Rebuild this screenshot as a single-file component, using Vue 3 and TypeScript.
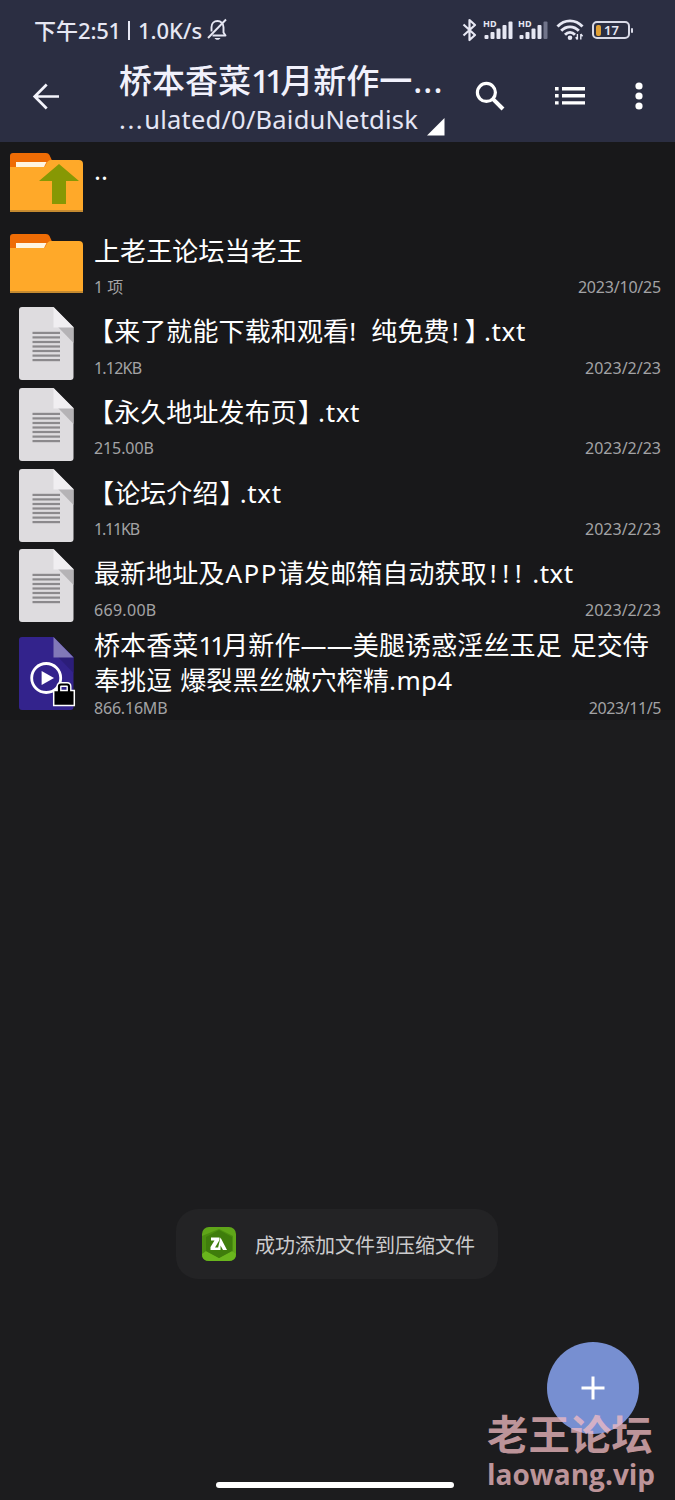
<script setup lang="ts">
interface Run {
  t: string
  l?: number
  r?: number
  s?: number
  half?: boolean
}
interface Entry {
  kind: 'up' | 'folder' | 'text' | 'video'
  lines: Run[][]
  size?: string
  sizeSpacing?: number
  date?: string
  dateSpacing?: number
}

const entries: Entry[] = [
  { kind: 'up', lines: [[{ t: '..' }]] },
  { kind: 'folder', lines: [[{ t: '上老王论坛当老王' }]], size: '1 项', date: '2023/10/25', dateSpacing: -0.2 },
  {
    kind: 'text',
    lines: [[{ t: '【', l: 7, half: true }, { t: '来了就能下载和观看' }, { t: '!', r: 15 }, { t: '纯免费' }, { t: '!', l: 2, r: 6 }, { t: '】', r: 6, half: true }, { t: '.txt', s: 0.6 }]],
    size: '1.12KB',
    sizeSpacing: -0.8,
    date: '2023/2/23',
  },
  {
    kind: 'text',
    lines: [[{ t: '【', l: 7, half: true }, { t: '永久地址发布页' }, { t: '】', l: 1, r: 7, half: true }, { t: '.txt', s: 0.6 }]],
    size: '215.00B',
    sizeSpacing: -0.1,
    date: '2023/2/23',
  },
  {
    kind: 'text',
    lines: [[{ t: '【', l: 7, half: true }, { t: '论坛介绍' }, { t: '】', l: 1, r: 7, half: true }, { t: '.txt', s: 0.6 }]],
    size: '1.11KB',
    sizeSpacing: -1.2,
    date: '2023/2/23',
  },
  {
    kind: 'text',
    lines: [[{ t: '最新地址及' }, { t: 'APP', l: 1, s: 1.4 }, { t: '请发邮箱自动获取' }, { t: '!!!', l: 3, s: 5.5 }, { t: '.txt', l: 5, s: 0.4 }]],
    size: '669.00B',
    sizeSpacing: 0.3,
    date: '2023/2/23',
  },
  {
    kind: 'video',
    lines: [
      [{ t: '桥本香菜' }, { t: '11', s: -3 }, { t: '月新作——美腿诱惑淫丝玉足' }, { t: ' ', s: 2 }, { t: '足交侍' }],
      [{ t: '奉挑逗' }, { t: ' ', s: 1 }, { t: '爆裂黑丝嫩穴榨精' }, { t: '.mp4', s: 0.3 }],
    ],
    size: '866.16MB',
    sizeSpacing: -0.2,
    date: '2023/11/5',
    dateSpacing: -0.4,
  },
]

const px = (n?: number) => `${n ?? 0}px`
const runStyle = (r: Run) => ({ marginLeft: px(r.l), marginRight: px(r.r), letterSpacing: px(r.s ?? 0.12) })
const docLines = [25.6, 30.1, 34.7, 39.2, 43.7, 48.3, 52.8]
const bars = [4, 7, 10.5, 14, 17.5]
</script>

<template>
  <div class="screen">
    <header class="top">
      <div class="status">
        <span class="clock">下午<span class="latin">2:51</span></span>
        <span class="rule"></span>
        <span class="speed">1.0K/s</span>
        <svg class="bell" width="23" height="24" viewBox="0 0 23 24" fill="none" stroke="#e6e7f3" stroke-width="1.9">
          <path d="M6.5 17.5H19.5L17.5 14.5V9.2C17.5 5.5 14.8 3 11.5 3C8.2 3 5.5 5.5 5.5 9.2V13.5" stroke-linejoin="round" />
          <path d="M20 1.5L2 20" />
          <path d="M8.5 20C9.5 22.4 13.5 22.4 14.5 20Z" fill="#e6e7f3" stroke="none" />
        </svg>
        <div class="grow"></div>
        <svg class="bt" width="15" height="24" viewBox="0 0 15 24" fill="none" stroke="#e6e7f3" stroke-width="2.2" stroke-linejoin="round">
          <path d="M1.5 6.5L13 17L7.5 22V2L13 7L1.5 17.5" />
        </svg>
        <div v-for="n in 2" :key="n" class="signal">
          <span class="hd">HD</span>
          <svg width="30" height="20" viewBox="0 0 30 20">
            <rect v-for="(h, i) in bars" :key="i" :x="1.5 + i * 6" :y="19 - h" width="4" :height="h" rx="1"
              :fill="n === 2 && i === 4 ? '#71748a' : '#e6e7f3'" />
          </svg>
        </div>
        <svg class="wifi" width="28" height="22" viewBox="0 0 28 22" fill="none" stroke="#e6e7f3" stroke-width="2.9">
          <path d="M1.5 7.5C8.5 0 19.5 0 26.5 7.5" />
          <path d="M5.2 11.8C10.2 6.5 17.8 6.5 22.8 11.8" />
          <path d="M9 15.8C12 12.8 16 12.8 19 15.8" />
          <circle cx="14" cy="18.7" r="2.3" fill="#e6e7f3" stroke="none" />
          <path d="M21.4 20.5V15M24.8 15V20.5M19.7 18.3L21.4 20.5M24.8 15L26.6 17.2" stroke-width="1.4" />
        </svg>
        <div class="battery">
          <span class="charge"></span><span class="percent">17</span>
          <span class="nub"></span>
        </div>
      </div>
      <div class="bar">
        <svg class="back" width="28" height="28" viewBox="0 0 28 28" fill="none" stroke="#f4f4fc" stroke-width="2.7">
          <path d="M27 14.5H3M14.7 2.5L2.7 14.5L14.7 26.5" />
        </svg>
        <div class="heading">
          <div class="title">桥本香菜<span class="ones">11</span>月新作一<span class="dots">...</span></div>
          <div class="path"><span class="lead">...</span>ulated/0/BaiduNetdisk</div>
          <svg class="corner" width="18" height="18" viewBox="0 0 18 18"><path d="M17.5 0V17.5H0Z" fill="#fff" /></svg>
        </div>
        <svg class="search" width="30" height="30" viewBox="0 0 30 30" fill="none" stroke="#fff">
          <circle cx="11.4" cy="11.4" r="9" stroke-width="3.2" />
          <path d="M17.8 17.8L28 28" stroke-width="4" />
        </svg>
        <svg class="lines" width="31" height="18" viewBox="0 0 31 18" fill="#fff">
          <path d="M0 0H3.600V3.400H0ZM0 7.100H3.600V10.500H0ZM0 14.200H3.600V17.600H0ZM7 0H30V3.400H7ZM7 7.100H30V10.500H7ZM7 14.200H30V17.600H7Z" />
        </svg>
        <svg class="more" width="8" height="28" viewBox="0 0 8 28" fill="#fff">
          <circle cx="4" cy="4" r="3.6" /><circle cx="4" cy="14" r="3.6" /><circle cx="4" cy="24" r="3.6" />
        </svg>
      </div>
    </header>

    <main class="list">
      <div v-for="(e, i) in entries" :key="i" class="row" :class="e.kind">
        <div class="icon">
          <svg v-if="e.kind === 'up' || e.kind === 'folder'" width="73" height="60" viewBox="0 0 73 60">
            <path d="M0 20V3Q0 0 3 0H36Q38.500 0 39.500 2L44 12V20Z" fill="#ee6c05" />
            <path d="M0 14H33Q35 14 36 11.500Q37.500 7 41 7H69Q73 7 73 11V59H0Z" fill="#ffa929" />
            <path d="M6 9H36.500L34 14H6Z" fill="#fff5e0" />
            <path d="M0 57H73V59H0Z" fill="#c58a30" />
            <path v-if="e.kind === 'up'" d="M49 11L69 28H56V51H42V28H29Z" fill="#879804" />
          </svg>
          <svg v-else-if="e.kind === 'text'" width="55" height="73" viewBox="0 0 55 73">
            <path d="M3 0H34.500L54.500 20V70Q54.500 73 51.500 73H3Q0 73 0 70V3Q0 0 3 0Z" fill="#dedcdf" />
            <path d="M39 20H54.500V36Z" fill="#b5b3b6" />
            <path d="M34.500 0L54.500 20.500H34.500Z" fill="#f0eef1" />
            <rect v-for="y in docLines" :key="y" x="13.500" :y="y - 0.8" width="27.500" height="2.200" fill="#8b898c" />
          </svg>
          <svg v-else width="57" height="73" viewBox="0 0 57 73">
            <path d="M3 0H34.500L54.500 20V70Q54.500 73 51.500 73H3Q0 73 0 70V3Q0 0 3 0Z" fill="#33238c" />
            <path d="M39 20H54.500V36Z" fill="#2b1d79" />
            <path d="M34.500 0L54.500 20.500H34.500Z" fill="#8178b8" />
            <circle cx="27.200" cy="41" r="14.500" fill="none" stroke="#fff" stroke-width="2.800" />
            <path d="M22.600 34V48L35 41Z" fill="#fff" />
            <path d="M40 55V49.500Q40 47.500 42 47.500H48Q50 47.500 50 49.500V55" fill="none" stroke="#fff" stroke-width="5" />
            <rect x="34.700" y="53.500" width="20.600" height="15" fill="#000" stroke="#fff" stroke-width="1.500" />
            <path d="M40 56V49.500Q40 47.500 42 47.500H48Q50 47.500 50 49.500V56" fill="none" stroke="#000" stroke-width="2.200" />
          </svg>
        </div>
        <div class="body">
          <div class="name">
            <div v-for="(line, k) in e.lines" :key="k" class="line"><span v-for="(r, j) in line" :key="j" :class="{ half: r.half }" :style="runStyle(r)">{{ r.t }}</span></div>
          </div>
          <div v-if="e.size" class="meta">
            <span class="size" :style="{ letterSpacing: px(e.sizeSpacing) }">{{ e.size }}</span>
            <span class="date" :style="{ letterSpacing: px(e.dateSpacing) }">{{ e.date }}</span>
          </div>
        </div>
      </div>
    </main>

    <div class="toast">
      <svg width="34" height="34" viewBox="0 0 34 34">
        <rect width="34" height="34" rx="7" fill="#5fa519" />
        <path d="M0 9L17 2L31 9V25L17 34H7Q0 34 0 27Z" fill="#4b8e10" />
        <path d="M4 24L17 31L30 24L34 27Q34 34 27 34H7Q0 34 0 27Z" fill="#69b51d" />
        <path d="M17 3L30 10V24L17 31L4 24V10Z" fill="#3f7d0c" />
        <path d="M9 10.500H17.500V13L13 20.500H16V23H8.500V20L12.500 13.500H9Z" fill="#fff" />
        <path d="M18.500 10.500L25 23H21L18.500 18.500V23H15.500Z" fill="#fff" />
      </svg>
      <span class="message">成功添加文件到压缩文件</span>
    </div>

    <div class="fab">
      <svg width="24" height="24" viewBox="0 0 24 24"><path d="M12 .5V23.500M.5 12H23.500" stroke="#fff" stroke-width="3" /></svg>
    </div>
    <div class="mark"><div class="forum">老王论坛</div><div class="site">laowang.vip</div></div>
    <div class="home"></div>
  </div>
</template>

<style>
body {
  background: #1c1c1e;
}
</style>

<style scoped>
.screen {
  position: relative;
  width: 675px;
  height: 1500px;
  overflow: hidden;
  background: #1c1c1e;
  color: #fff;
  font-family: "Noto Sans", "Noto Sans CJK SC", sans-serif;
  white-space: pre;
}
.top {
  height: 142px;
  background: #2b2e42;
}
.status {
  height: 60px;
  padding: 0 45px 0 34px;
  display: flex;
  align-items: center;
  box-sizing: border-box;
  color: #e6e7f3;
  font-size: 22px;
  font-weight: 500;
  line-height: 30px;
}
.latin { letter-spacing: -0.2px; }
.rule { width: 2px; height: 19px; margin: 0 8px 0 7px; background: #e6e7f3; }
.speed { letter-spacing: 0; }
.bell { margin-left: 4px; }
.grow { flex: 1; }
.bt { margin-right: 6px; }
.signal { position: relative; width: 35px; height: 20px; }
.signal svg { display: block; }
.hd {
  position: absolute;
  left: 0;
  top: -1px;
  font-size: 9px;
  line-height: 10px;
  font-weight: 700;
}
.wifi { margin: 0 8px 0 3px; }
.battery {
  position: relative;
  display: flex;
  align-items: center;
  width: 38px;
  height: 18px;
  padding-left: 2px;
  box-sizing: border-box;
  border: 2px solid #d9dae7;
  border-radius: 5px;
}
.charge { width: 5px; height: 11px; border-radius: 2px; background: #e0a035; }
.percent { margin-left: 3px; font-size: 13px; line-height: 14px; font-weight: 600; }
.nub { position: absolute; right: -5px; top: 5px; width: 2px; height: 5px; background: #d9dae7; border-radius: 1px; }
.bar {
  height: 82px;
  display: flex;
  align-items: flex-start;
  padding-left: 32px;
}
.back { margin-top: 22px; }
.heading { position: relative; width: 326px; margin-left: 59px; }
.title { height: 42px; line-height: 42px; font-size: 33px; font-weight: 500; color: #f1f1fc; }
.ones { letter-spacing: -4.8px; margin-right: 1px; }
.dots { letter-spacing: 1.2px; margin-left: 1px; }
.path { height: 34px; line-height: 34px; font-size: 25.5px; letter-spacing: 0.2px; color: #e5e6f5; }
.lead { letter-spacing: 1.6px; }
.corner { position: absolute; right: 0; top: 58px; }
.search { margin: 21px 0 0 30px; }
.lines { margin: 27px 0 0 50px; }
.more { margin: 22px 0 0 49px; }
.list { background: #18181a; height: 578px; }
.row { display: flex; height: 80.7px; }
.icon { width: 94px; padding-left: 19px; padding-top: 4px; box-sizing: border-box; flex: none; }
.icon svg { display: block; }
.up .icon, .folder .icon { padding-left: 10px; padding-top: 11px; }
.body { flex: 1; padding-right: 14px; }
.name { padding-top: 11px; font-size: 26px; }
.line { height: 35px; line-height: 35px; }
.line span { display: inline-block; }
.line .half { font-feature-settings: "halt"; letter-spacing: 0; }
.meta {
  display: flex;
  justify-content: space-between;
  margin-top: 8.4px;
  height: 21px;
  line-height: 21px;
  font-size: 16px;
  color: #a3a3a5;
}
.video { height: 93.8px; }
.video .icon { padding-top: 11px; }
.video .name { padding-top: 2px; }
.video .meta { margin-top: 0; }
.toast {
  position: absolute;
  left: 176px;
  top: 1209px;
  width: 322px;
  height: 70px;
  border-radius: 22px;
  box-sizing: border-box;
  padding-left: 26px;
  display: flex;
  align-items: center;
  gap: 19px;
  background: #232325;
  color: #cbcbcd;
  font-size: 20px;
  line-height: 30px;
}
.message { padding-top: 3px; }
.fab {
  position: absolute;
  left: 547px;
  top: 1342px;
  width: 92px;
  height: 92px;
  border-radius: 50%;
  display: grid;
  place-items: center;
  background: #778fd1;
}
.mark {
  position: absolute;
  left: 487px;
  top: 1410px;
  color: rgba(242, 188, 195, 0.75);
  font-weight: 700;
}
.forum { font-size: 41.4px; line-height: 48px; }
.site { font-family: "Open Sans", "Noto Sans", sans-serif; font-size: 28px; line-height: 32px; }
.home {
  position: absolute;
  left: 216px;
  top: 1482px;
  width: 238px;
  height: 6px;
  border-radius: 3px;
  background: #fff;
}
</style>
